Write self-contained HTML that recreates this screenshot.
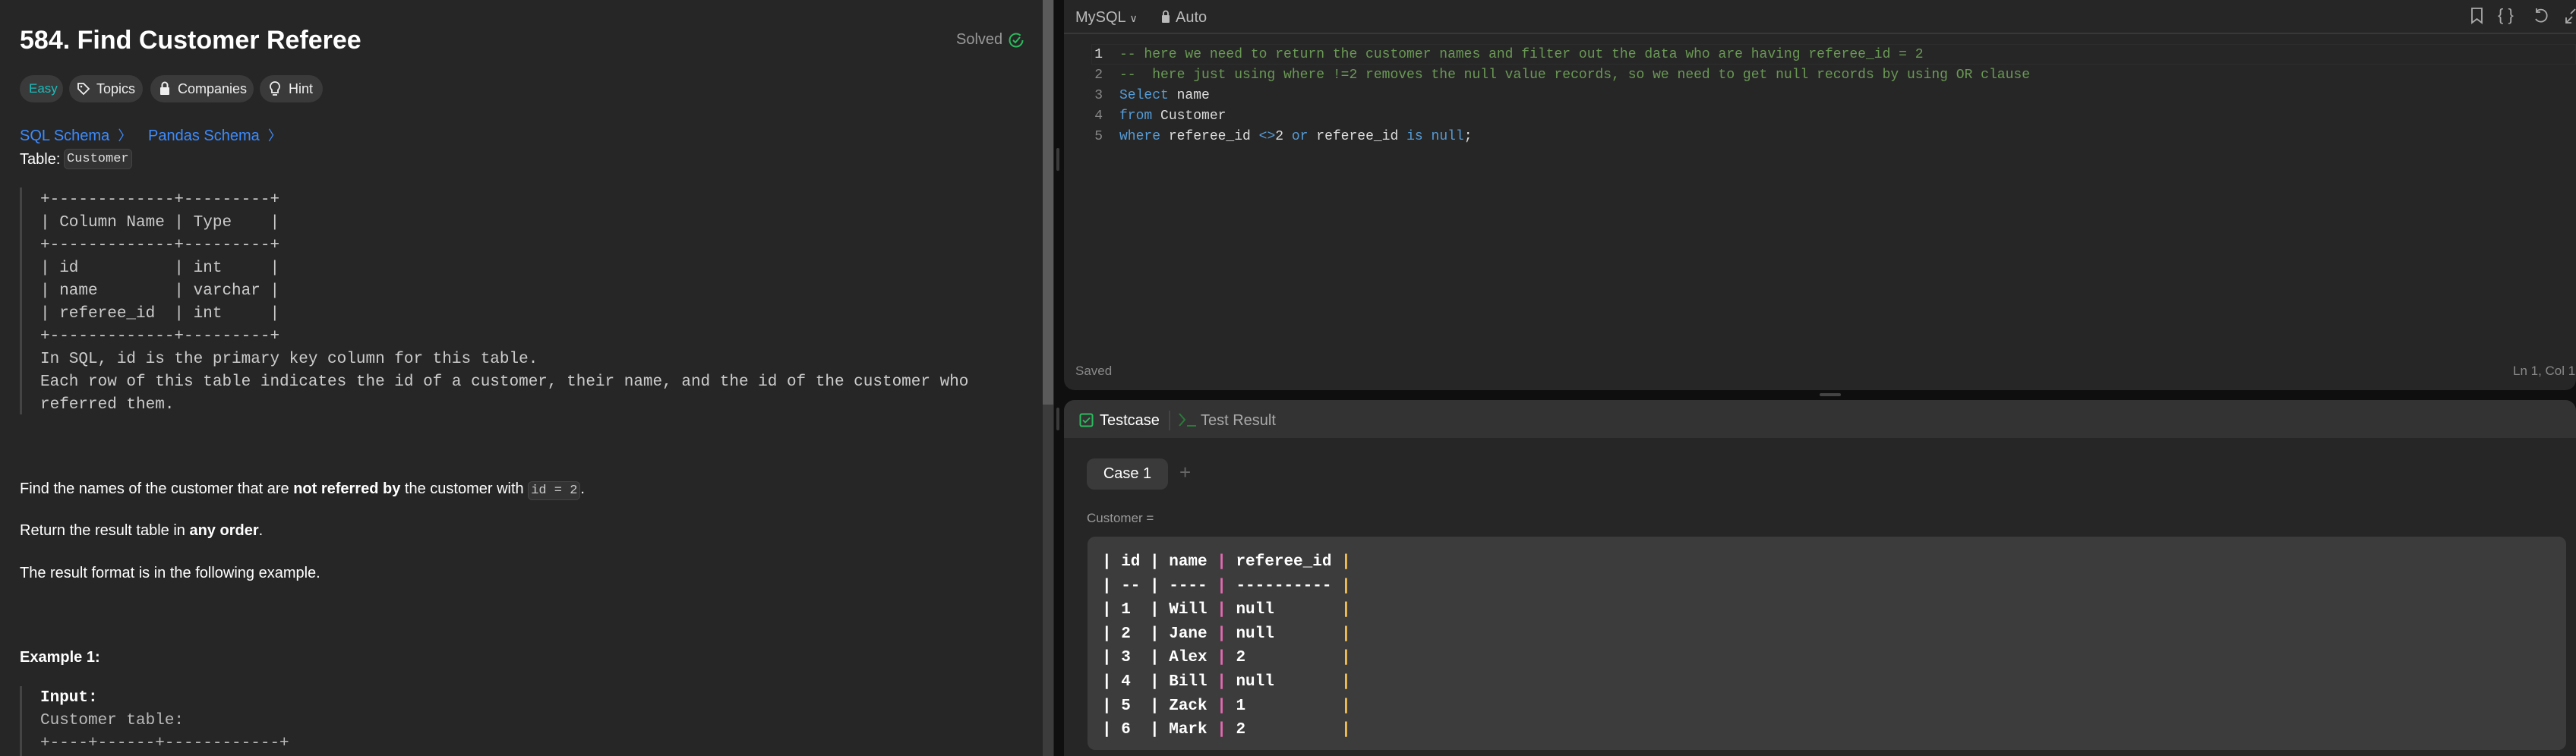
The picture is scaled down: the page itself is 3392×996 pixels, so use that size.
<!DOCTYPE html>
<html><head><meta charset="utf-8"><style>
*{margin:0;padding:0;box-sizing:border-box}
body{width:3392px;height:996px;background:#0f0f0f;font-family:"Liberation Sans",sans-serif;overflow:hidden;position:relative;color:#eee}
.abs{position:absolute;white-space:pre}
.mono{font-family:"Liberation Mono",monospace}
#left{position:absolute;left:0;top:0;width:1388px;height:996px;background:#262626}
.pill{position:absolute;top:99px;height:36px;border-radius:18px;background:#3a3a3a;font-size:18px;line-height:36px;color:#eee;padding-left:12px}
#ed{position:absolute;left:1401px;top:0;width:1991px;height:514px;background:#262626;border-radius:0 0 14px 14px}
#bt{position:absolute;left:1401px;top:527px;width:1991px;height:469px;background:#262626;border-radius:14px 14px 0 0;overflow:hidden}
.cm{color:#6a9955}.kw{color:#569cd6}
.p{color:#e56ab2}.y{color:#f6c35a}
</style></head><body>
<div id="left">
 <div class="abs" style="left:26px;top:34px;font-size:34px;font-weight:bold;color:#fff">584. Find Customer Referee</div>
 <div class="abs" style="left:1259px;top:41px;font-size:20px;color:#999">Solved</div>
 <svg class="abs" style="left:1327px;top:42px" width="22" height="22" viewBox="0 0 22 22"><circle cx="11" cy="11" r="8.5" fill="none" stroke="#2cbb5d" stroke-width="2" stroke-dasharray="46 8"/><path d="M7 11l3 3 6-7" fill="none" stroke="#2cbb5d" stroke-width="2"/></svg>
 <div class="pill" style="left:26px;width:57px;color:#1cbaba;padding-left:12px;font-size:17px">Easy</div>
 <div class="pill" style="left:91px;width:97px;padding-left:36px">Topics</div>
 <svg class="abs" style="left:101px;top:108px" width="18" height="18" viewBox="0 0 18 18"><path d="M2 2h7l7 7-7 7-7-7z" fill="none" stroke="#eee" stroke-width="1.8"/><circle cx="6" cy="6" r="1.3" fill="#eee"/></svg>
 <div class="pill" style="left:198px;width:136px;padding-left:36px">Companies</div>
 <svg class="abs" style="left:209px;top:107px" width="16" height="20" viewBox="0 0 16 20"><rect x="2" y="8" width="12" height="10" rx="1" fill="#eee"/><path d="M4.5 8V5a3.5 3.5 0 0 1 7 0v3" fill="none" stroke="#eee" stroke-width="2"/></svg>
 <div class="pill" style="left:342px;width:83px;padding-left:38px">Hint</div>
 <svg class="abs" style="left:354px;top:106px" width="16" height="22" viewBox="0 0 16 22"><path d="M8 2a6 6 0 0 0-4 10.5V16h8v-3.5A6 6 0 0 0 8 2zM5 19h6" fill="none" stroke="#eee" stroke-width="1.8"/></svg>
 <div class="abs" style="left:26px;top:165px;font-size:20px;color:#3d8bfd">SQL Schema  <span style="font-size:18px">〉</span></div>
 <div class="abs" style="left:195px;top:165px;font-size:20px;color:#3d8bfd">Pandas Schema  <span style="font-size:18px">〉</span></div>
 <div class="abs" style="left:26px;top:199px;font-size:20px;color:#fff">Table:</div>
 <div class="abs mono" style="left:84px;top:196px;height:27px;padding:0 3px;border:1px solid #444;background:#333;border-radius:6px;font-size:17px;line-height:25px;color:#ddd">Customer</div>
 <div class="abs" style="left:26px;top:247px;width:3px;height:299px;background:#444"></div>
 <div class="abs mono" style="left:53px;top:249px;font-size:21px;line-height:30px;color:#ccc">+-------------+---------+
| Column Name | Type    |
+-------------+---------+
| id          | int     |
| name        | varchar |
| referee_id  | int     |
+-------------+---------+
In SQL, id is the primary key column for this table.
Each row of this table indicates the id of a customer, their name, and the id of the customer who
referred them.</div>
 <div class="abs" style="left:26px;top:633px;font-size:20px;color:#fff">Find the names of the customer that are <b>not referred by</b> the customer with <span class="mono" style="font-size:17px;background:#333;border:1px solid #444;border-radius:6px;padding:2px 3px;color:#ccc">id = 2</span>.</div>
 <div class="abs" style="left:26px;top:688px;font-size:20px;color:#fff">Return the result table in <b>any order</b>.</div>
 <div class="abs" style="left:26px;top:744px;font-size:20px;color:#fff">The result format is in the following example.</div>
 <div class="abs" style="left:26px;top:855px;font-size:20px;color:#fff;font-weight:bold">Example 1:</div>
 <div class="abs" style="left:26px;top:904px;width:3px;height:92px;background:#444"></div>
 <div class="abs mono" style="left:53px;top:905px;font-size:21px;line-height:30px;color:#bbb"><b style="color:#fff">Input:</b>
Customer table:
+----+------+------------+</div>
 <div class="abs" style="left:1373px;top:0;width:14px;height:533px;background:#5a5a5a"></div>
 <div class="abs" style="left:1373px;top:533px;width:14px;height:463px;background:#3c3c3c"></div>
</div>
<div class="abs" style="left:1391px;top:537px;width:4px;height:30px;background:#3a3a3a;border-radius:2px"></div>
<div class="abs" style="left:1391px;top:195px;width:4px;height:30px;background:#3a3a3a;border-radius:2px"></div>
<div id="ed">
 <div class="abs" style="left:15px;top:12px;font-size:20px;color:#bbb">MySQL <span style="font-size:14px">∨</span></div>
 <svg class="abs" style="left:128px;top:13px" width="12" height="18" viewBox="0 0 12 18"><rect x="1" y="7" width="10" height="10" rx="1" fill="#bbb"/><path d="M3 7V4.5a3 3 0 0 1 6 0V7" fill="none" stroke="#bbb" stroke-width="1.8"/></svg>
 <div class="abs" style="left:147px;top:12px;font-size:20px;color:#bbb">Auto</div>
 <svg class="abs" style="left:1852px;top:9px" width="18" height="24" viewBox="0 0 18 24"><path d="M2 2h13v19l-6.5-5L2 21z" fill="none" stroke="#aaa" stroke-width="1.8"/></svg>
 <div class="abs" style="left:1888px;top:7px;font-size:22px;color:#aaa">{ }</div>
 <svg class="abs" style="left:1934px;top:10px" width="22" height="22" viewBox="0 0 22 22"><path d="M5 5a8 8 0 1 1-1 10" fill="none" stroke="#aaa" stroke-width="1.8"/><path d="M5 1v5h5" fill="none" stroke="#aaa" stroke-width="1.8"/></svg>
 <svg class="abs" style="left:1976px;top:10px" width="16" height="22" viewBox="0 0 16 22"><path d="M2 20l8-8M2 13v7h7M14 2l-6 6" fill="none" stroke="#aaa" stroke-width="1.8"/></svg>
 <div class="abs" style="left:0;top:43px;width:1991px;height:2px;background:#383838"></div>
 <div class="abs" style="left:36px;top:58px;width:1955px;height:27px;border:1px solid #2d2d2d"></div>
 <div class="abs mono" style="left:37px;top:59px;font-size:18px;line-height:27px;color:#858585;text-align:right;width:14px"><span style="color:#ddd">1</span>
2
3
4
5</div>
 <div class="abs mono" style="left:73px;top:59px;font-size:18px;line-height:27px;color:#ddd"><span class="cm">-- here we need to return the customer names and filter out the data who are having referee_id = 2</span>
<span class="cm">--  here just using where !=2 removes the null value records, so we need to get null records by using OR clause</span>
<span class="kw">Select</span> name
<span class="kw">from</span> Customer
<span class="kw">where</span> referee_id <span class="kw">&lt;&gt;</span>2 <span class="kw">or</span> referee_id <span class="kw">is</span> <span class="kw">null</span>;</div>
 <div class="abs" style="left:15px;top:479px;font-size:17px;color:#888">Saved</div>
 <div class="abs" style="left:1908px;top:479px;font-size:17px;color:#888">Ln 1, Col 1</div>
</div>
<div class="abs" style="left:2396px;top:518px;width:28px;height:4px;background:#444;border-radius:2px"></div>
<div id="bt">
 <div class="abs" style="left:0;top:0;width:1991px;height:50px;background:#333"></div>
 <svg class="abs" style="left:20px;top:17px" width="19" height="19" viewBox="0 0 19 19"><rect x="1.5" y="1.5" width="16" height="16" rx="2" fill="none" stroke="#2cbb5d" stroke-width="2"/><path d="M5 9.5l3 3 6-6" fill="none" stroke="#2cbb5d" stroke-width="1.8"/></svg>
 <div class="abs" style="left:47px;top:16px;font-size:20px;color:#fff">Testcase</div>
 <div class="abs" style="left:138px;top:14px;width:2px;height:26px;background:#444"></div>
 <svg class="abs" style="left:150px;top:16px" width="26" height="20" viewBox="0 0 26 20"><path d="M2 2l7 8-7 8M12 18h12" fill="none" stroke="#2a7a3a" stroke-width="2"/></svg>
 <div class="abs" style="left:180px;top:16px;font-size:20px;color:#aaa">Test Result</div>
 <div class="abs" style="left:30px;top:77px;width:107px;height:41px;background:#3a3a3a;border-radius:10px;font-size:20px;line-height:41px;text-align:center;color:#fff">Case 1</div>
 <div class="abs" style="left:152px;top:80px;font-size:26px;color:#666">+</div>
 <div class="abs" style="left:30px;top:146px;font-size:17px;color:#999">Customer =</div>
 <div class="abs" style="left:31px;top:180px;width:1947px;height:281px;background:#3c3c3c;border-radius:10px"></div>
 <div class="abs mono" style="left:50px;top:198px;font-size:21px;line-height:31.6px;color:#fff;font-weight:bold">| id | name <span class="p">|</span> referee_id <span class="y">|</span>
| -- | ---- <span class="p">|</span> ---------- <span class="y">|</span>
| 1  | Will <span class="p">|</span> null       <span class="y">|</span>
| 2  | Jane <span class="p">|</span> null       <span class="y">|</span>
| 3  | Alex <span class="p">|</span> 2          <span class="y">|</span>
| 4  | Bill <span class="p">|</span> null       <span class="y">|</span>
| 5  | Zack <span class="p">|</span> 1          <span class="y">|</span>
| 6  | Mark <span class="p">|</span> 2          <span class="y">|</span></div>
</div>
</body></html>
